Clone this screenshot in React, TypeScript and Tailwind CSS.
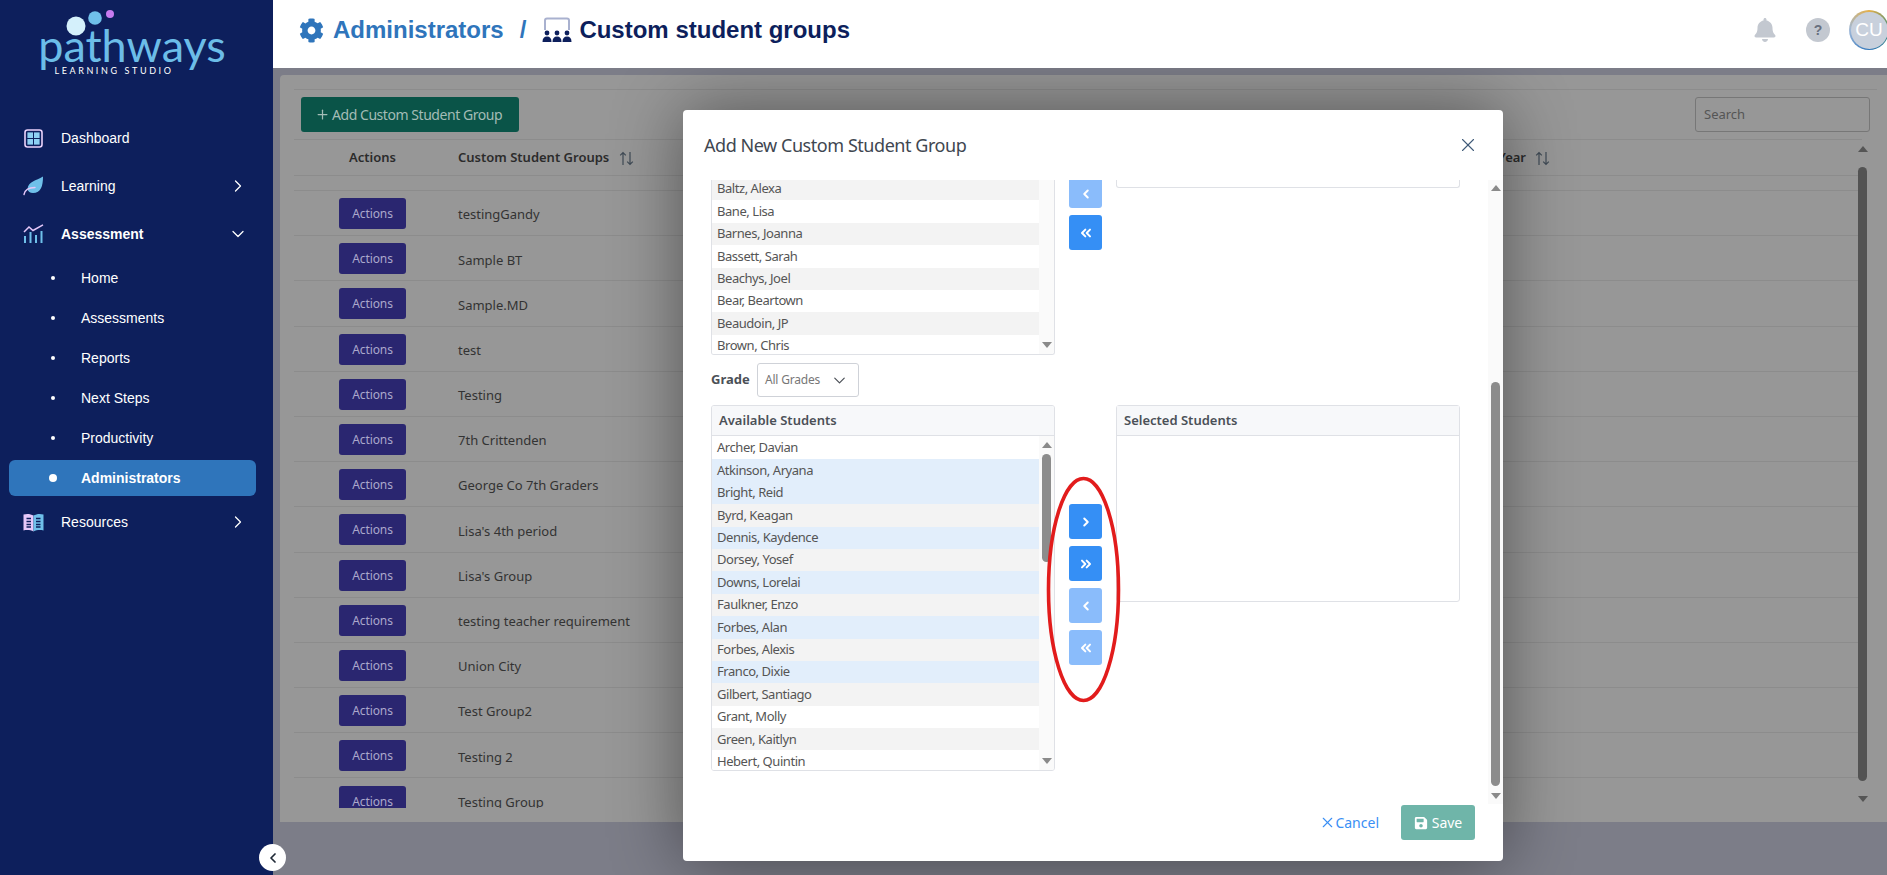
import { ChevronDown, ChevronLeft, ChevronRight, ChevronsLeft, ChevronsRight, Plus, X } from "lucide-react";
import { FaBell, FaCog, FaSave } from "react-icons/fa";

const groups = [
  "testingGandy",
  "Sample BT",
  "Sample.MD",
  "test",
  "Testing",
  "7th Crittenden",
  "George Co 7th Graders",
  "Lisa's 4th period",
  "Lisa's Group",
  "testing teacher requirement",
  "Union City",
  "Test Group2",
  "Testing 2",
  "Testing Group",
];

const topStudents = [
  "Baltz, Alexa",
  "Bane, Lisa",
  "Barnes, Joanna",
  "Bassett, Sarah",
  "Beachys, Joel",
  "Bear, Beartown",
  "Beaudoin, JP",
  "Brown, Chris",
];

const students = [
  { name: "Archer, Davian", bg: "bg-white" },
  { name: "Atkinson, Aryana", bg: "bg-[#e2eefb]" },
  { name: "Bright, Reid", bg: "bg-[#e2eefb]" },
  { name: "Byrd, Keagan", bg: "bg-[#f3f3f3]" },
  { name: "Dennis, Kaydence", bg: "bg-[#e2eefb]" },
  { name: "Dorsey, Yosef", bg: "bg-[#f3f3f3]" },
  { name: "Downs, Lorelai", bg: "bg-[#e2eefb]" },
  { name: "Faulkner, Enzo", bg: "bg-[#f3f3f3]" },
  { name: "Forbes, Alan", bg: "bg-[#e2eefb]" },
  { name: "Forbes, Alexis", bg: "bg-[#f3f3f3]" },
  { name: "Franco, Dixie", bg: "bg-[#e2eefb]" },
  { name: "Gilbert, Santiago", bg: "bg-[#f3f3f3]" },
  { name: "Grant, Molly", bg: "bg-white" },
  { name: "Green, Kaitlyn", bg: "bg-[#f3f3f3]" },
  { name: "Hebert, Quintin", bg: "bg-white" },
];

const subItems = ["Home", "Assessments", "Reports", "Next Steps", "Productivity"];

function DashIcon() {
  return (
    <svg width="19" height="19" viewBox="0 0 19 19">
      <rect x="1" y="1" width="17" height="17" rx="2.5" fill="#0d1f5c" stroke="#ecd3fb" strokeWidth="1.6" />
      <rect x="3.4" y="3.4" width="5.6" height="5.6" fill="#8ed0f2" />
      <rect x="10" y="3.4" width="5.6" height="5.6" fill="#8ed0f2" />
      <rect x="3.4" y="10" width="5.6" height="5.6" fill="#8ed0f2" />
      <rect x="10" y="10" width="5.6" height="5.6" fill="#8ed0f2" />
    </svg>
  );
}

function LeafIcon() {
  return (
    <svg width="21" height="20" viewBox="0 0 21 20">
      <path d="M20 0.5C20 10 18 17 10 17C7 17 5 15.5 4.5 13C5.5 5 13 5 20 0.5Z" fill="#6fc0ea" />
      <path d="M1 18.5C2 13 6 11.5 12 11.5" fill="none" stroke="#e6c8fa" strokeWidth="1.4" strokeLinecap="round" />
    </svg>
  );
}

function ChartIcon() {
  return (
    <svg width="21" height="20" viewBox="0 0 21 20">
      <path d="M1 8L6 3L10 6.5L20 0.8" fill="none" stroke="#e6c8fa" strokeWidth="1.5" />
      <path d="M2 12V19M7.5 8V19M13 11V19M18.5 7V19" stroke="#6fc0ea" strokeWidth="2" />
    </svg>
  );
}

function BookIcon() {
  return (
    <svg width="21" height="19" viewBox="0 0 21 19">
      <path d="M0.5 1.5C4 0.5 7.5 0.8 10.5 2.5V18.5C7.5 17 4 16.7 0.5 17.5Z" fill="#e6c8fa" />
      <path d="M20.5 1.5C17 0.5 13.5 0.8 10.5 2.5V18.5C13.5 17 17 16.7 20.5 17.5Z" fill="#6fc0ea" />
      <path d="M3.5 5.5H8M3.5 8.5H8M3.5 11.5H8M3.5 14H8M13 5.5H17.5M13 8.5H17.5M13 11.5H17.5M13 14H17.5" stroke="#0d1f5c" strokeWidth="1.4" />
    </svg>
  );
}

function GroupsIcon() {
  return (
    <svg width="30" height="27" viewBox="0 0 30 27" className="text-[#0d1f5c]">
      <path d="M3 13V3.5C3 2.4 3.9 1.5 5 1.5H25C26.1 1.5 27 2.4 27 3.5V13" fill="none" stroke="#a9b1cf" strokeWidth="2" />
      <circle cx="5" cy="16" r="2.4" fill="currentColor" />
      <circle cx="15" cy="16" r="2.4" fill="currentColor" />
      <circle cx="25" cy="16" r="2.4" fill="currentColor" />
      <path d="M0.5 25C0.5 21.5 2 19.6 5 19.6C8 19.6 9.5 21.5 9.5 25ZM10.5 25C10.5 21.5 12 19.6 15 19.6C18 19.6 19.5 21.5 19.5 25ZM20.5 25C20.5 21.5 22 19.6 25 19.6C28 19.6 29.5 21.5 29.5 25Z" fill="currentColor" />
    </svg>
  );
}

function SortIcon() {
  return (
    <svg width="15" height="15" viewBox="0 0 15 15" className="text-[#3f4a55]">
      <path d="M4 14V1.5M1.2 4.3L4 1.5L6.8 4.3M11 1V13.5M8.2 10.7L11 13.5L13.8 10.7" fill="none" stroke="currentColor" strokeWidth="1.2" />
    </svg>
  );
}

function Tri({ up, color }: { up?: boolean; color: string }) {
  return (
    <svg width="10" height="6" viewBox="0 0 10 6" fill={color}>
      <path d={up ? "M5 0L10 6H0Z" : "M0 0H10L5 6Z"} />
    </svg>
  );
}

function ListScroll({ thumb }: { thumb: boolean }) {
  return (
    <div className="absolute right-0 top-0 bottom-0 w-[15px] bg-[#fafafa] flex flex-col items-center justify-between py-[6px]">
      {thumb ? <Tri up color="#8a8a8a" /> : <span />}
      {thumb && <div className="absolute left-[3px] top-[18px] w-[9px] h-[108px] rounded-[5px] bg-[#8c8c8c]" />}
      <Tri color="#8a8a8a" />
    </div>
  );
}

function MoveBtn({ light, className, children }: { light?: boolean; className?: string; children: React.ReactNode }) {
  return (
    <div className={`w-[33px] flex items-center justify-center rounded-[3px] text-white ${light ? "bg-[#8abcfb]" : "bg-[#358ff5]"} ${className ?? "h-[35px]"}`}>
      {children}
    </div>
  );
}

function Sidebar() {
  return (
    <aside className="relative z-20 w-[273px] h-full shrink-0 bg-[#0d1f5c] text-white text-[14px] font-['Liberation_Sans',sans-serif]">
      {/* Logo */}
      <div className="h-[114px] flex flex-col items-center">
        <svg width="273" height="36" viewBox="0 0 273 36" className="block">
          <circle cx="76" cy="26" r="9.5" fill="#d4f0fb" />
          <circle cx="95" cy="18" r="6.8" fill="#6fc0ea" />
          <circle cx="110" cy="14" r="4" fill="#c77bf0" />
        </svg>
        <div className="font-['Lato',sans-serif] text-[45px] h-[36px] leading-[36px] text-[#6cbde8] -mt-[9px] pr-[9px]">pathways</div>
        <div className="font-['Lato',sans-serif] text-[9px] leading-[10px] tracking-[2.6px] mt-[3px] pr-[45px]">LEARNING STUDIO</div>
      </div>

      <div className="h-[48px] flex items-center pl-[24px]">
        <span className="w-[37px]"><DashIcon /></span>
        <span>Dashboard</span>
      </div>
      <div className="h-[48px] flex items-center pl-[23px]">
        <span className="w-[38px]"><LeafIcon /></span>
        <span className="flex-1">Learning</span>
        <ChevronRight size={20} strokeWidth={1.5} className="mr-[25px]" />
      </div>
      <div className="h-[48px] flex items-center pl-[23px]">
        <span className="w-[38px]"><ChartIcon /></span>
        <span className="flex-1 font-bold">Assessment</span>
        <ChevronDown size={20} strokeWidth={1.5} className="mr-[25px]" />
      </div>
      {subItems.map((item) => (
        <div key={item} className="h-[40px] flex items-center">
          <span className="w-[4px] h-[4px] rounded-full bg-white ml-[51px] mr-[26px]" />
          <span>{item}</span>
        </div>
      ))}
      <div className="h-[36px] ml-[9px] mr-[17px] my-[2px] rounded-[6px] bg-[#2f75bb] flex items-center font-bold">
        <span className="w-[8px] h-[8px] rounded-full bg-white ml-[40px] mr-[24px]" />
        <span>Administrators</span>
      </div>
      <div className="h-[48px] flex items-center pl-[23px]">
        <span className="w-[38px]"><BookIcon /></span>
        <span className="flex-1">Resources</span>
        <ChevronRight size={20} strokeWidth={1.5} className="mr-[25px]" />
      </div>
    </aside>
  );
}

function Header() {
  return (
    <header className="relative z-20 h-[68px] shrink-0 bg-white flex items-center pl-[26px] pb-[8px] font-['Liberation_Sans',sans-serif] font-bold text-[24px]">
      <FaCog size={25} className="text-[#2f75bb] mr-[9px]" />
      <span className="text-[#2f75bb]">Administrators</span>
      <span className="text-[#2f75bb] ml-[16px] mr-[16px]">/</span>
      <GroupsIcon />
      <span className="text-[#0d1f5c] ml-[7px]">Custom student groups</span>
      <div className="ml-auto flex items-center">
        <FaBell size={24} className="text-[#c3c8d0]" />
        <div className="w-[24px] h-[24px] rounded-full bg-[#c3c8d0] text-[#68707f] text-[14px] flex items-center justify-center ml-[29px]">?</div>
        <div className="w-[40px] h-[40px] rounded-full bg-[conic-gradient(#e5b04a,#3c8a78,#2f75bb,#9fb8d8,#e5b04a)] p-[1.5px] ml-[19px] -mr-[2px] shrink-0">
          <div className="w-full h-full rounded-full bg-[#c8d0dc] text-white font-normal text-[19px] flex items-center justify-center">CU</div>
        </div>
      </div>
    </header>
  );
}

function Table() {
  return (
    <div className="h-[747px] ml-[7px] bg-[#979797] rounded-tl-[4px] pt-[14px] relative font-['Noto_Sans',sans-serif]">
      <div className="ml-[14px] mr-[10px] border-t border-[#8c8c8c] pt-[7px] pb-[7px] flex justify-between pl-[7px] pr-[7px]">
        <div className="w-[218px] h-[35px] rounded-[3px] bg-[#0a5448] text-[#a3bcb6] text-[14px] tracking-[-0.45px] flex items-center pl-[14px]">
          <Plus size={15} className="mr-[2px]" />
          <span>Add Custom Student Group</span>
        </div>
        <div className="w-[175px] h-[35px] rounded-[3px] border border-[#777] text-[#555] text-[13px] flex items-center pl-[8px]">Search</div>
      </div>
      <div className="ml-[14px] w-[1568px] h-[669px] overflow-hidden">
        <div className="h-[37px] border-y border-[#8c8c8c] pt-[1px] flex items-center text-[13px] font-semibold text-[#2b2b2b]">
          <span className="w-[164px] pl-[55px]">Actions</span>
          <span className="mr-[10px]">Custom Student Groups</span>
          <SortIcon />
          <span className="ml-auto">Year</span>
          <span className="ml-[9px] mr-[312px]"><SortIcon /></span>
        </div>
        <div className="h-[15px] border-b border-[#8c8c8c]" />
        {groups.map((g) => (
          <div key={g} className="h-[45.2px] border-b border-[#8c8c8c] flex items-center text-[13px] text-[#333]">
            <span className="w-[164px] pl-[45px] pt-[1px]">
              <span className="w-[67px] h-[31px] rounded-[3px] bg-[#2a2670] text-[#aaa8cc] text-[12px] tracking-[-0.1px] pt-[1px] flex items-center justify-center">Actions</span>
            </span>
            <span className="pt-[4px]">{g}</span>
          </div>
        ))}
      </div>
      {/* table scrollbar */}
      <div className="absolute left-[1578px] top-[70px] h-[658px] w-[9px] flex flex-col items-center justify-between py-[1px]">
        <Tri up color="#555" />
        <div className="w-[9px] h-[614px] rounded-[5px] bg-[#535353]" />
        <Tri color="#555" />
      </div>
    </div>
  );
}

function Modal() {
  return (
    <div className="absolute z-10 left-[683px] top-[110px] w-[820px] h-[751px] bg-white rounded-[4px] shadow-[0_0_70px_rgba(0,0,0,0.45)] font-['Noto_Sans',sans-serif] flex flex-col">
      <div className="h-[70px] shrink-0 flex items-center justify-between pl-[21px] pr-[24px]">
        <h2 className="text-[18px] tracking-[-0.45px] text-[#3f4751]">Add New Custom Student Group</h2>
        <X size={22} strokeWidth={1.2} className="text-[#3f5a78]" />
      </div>

      <div className="h-[625px] shrink-0 relative overflow-hidden pl-[28px] text-[13px] text-[#555]">
        {/* scrolled-off first picker */}
        <div className="flex gap-[14px] h-[175px]">
          <div className="w-[344px] h-full border-x border-b border-[#dfe1e6] rounded-b-[3px] relative overflow-hidden tracking-[-0.45px]">
            <div className="-mt-[2px]">
              {topStudents.map((s, i) => (
                <div key={s} className={`h-[22.4px] w-[327px] pl-[5px] flex items-center ${i % 2 === 0 ? "bg-[#f3f3f3]" : "bg-white"}`}>{s}</div>
              ))}
            </div>
            <ListScroll thumb={false} />
          </div>
          <div className="w-[33px] flex flex-col gap-[7px]">
            <MoveBtn light className="h-[28px] rounded-t-none">
              <ChevronLeft size={14} strokeWidth={3.4} />
            </MoveBtn>
            <MoveBtn>
              <ChevronsLeft size={16} strokeWidth={3} />
            </MoveBtn>
          </div>
          <div className="w-[344px] h-[8px] border-x border-b border-[#dfe1e6] rounded-b-[3px]" />
        </div>

        {/* grade filter */}
        <div className="flex items-center mt-[8px] h-[34px]">
          <span className="font-bold w-[46px] text-[#4b5057]">Grade</span>
          <div className="w-[102px] h-[34px] border border-[#cfd2d8] rounded-[3px] flex items-center justify-between pl-[7px] pr-[9px] text-[12px] tracking-[-0.2px] text-[#777]">
            <span>All Grades</span>
            <ChevronDown size={19} strokeWidth={1.5} className="text-[#4b5057]" />
          </div>
        </div>

        {/* second picker */}
        <div className="flex gap-[14px] mt-[8px] h-[366px]">
          <div className="w-[344px] h-full border border-[#dfe1e6] rounded-[3px] flex flex-col overflow-hidden">
            <div className="h-[30px] shrink-0 bg-[#f7f8fa] border-b border-[#dfe1e6] flex items-center pl-[7px] font-semibold text-[#4b5057]">Available Students</div>
            <div className="relative flex-1 overflow-hidden pt-[1px] tracking-[-0.45px]">
              {students.map((s) => (
                <div key={s.name} className={`h-[22.4px] w-[327px] pl-[5px] flex items-center ${s.bg}`}>{s.name}</div>
              ))}
              <ListScroll thumb />
            </div>
          </div>
          <div className="w-[33px] flex flex-col gap-[7px] pt-[99px]">
            <MoveBtn><ChevronRight size={14} strokeWidth={3.4} /></MoveBtn>
            <MoveBtn><ChevronsRight size={16} strokeWidth={3} /></MoveBtn>
            <MoveBtn light><ChevronLeft size={14} strokeWidth={3.4} /></MoveBtn>
            <MoveBtn light><ChevronsLeft size={16} strokeWidth={3} /></MoveBtn>
          </div>
          <div className="w-[344px] h-[197px] border border-[#dfe1e6] rounded-[3px]">
            <div className="h-[30px] bg-[#f7f8fa] border-b border-[#dfe1e6] flex items-center pl-[7px] font-semibold text-[#4b5057]">Selected Students</div>
          </div>
        </div>

        {/* modal scrollbar */}
        <div className="absolute right-0 top-0 bottom-[1px] w-[15px] bg-[#fafafa] flex flex-col items-center justify-between py-[5px]">
          <Tri up color="#8a8a8a" />
          <div className="absolute left-[3px] top-[202px] w-[9px] h-[404px] rounded-[5px] bg-[#8c8c8c]" />
          <Tri color="#8a8a8a" />
        </div>
      </div>

      <div className="flex-1 flex items-start justify-end pr-[28px] text-[14px]">
        <span className="flex items-center h-[35px] text-[#3a8ff5] mr-[22px]">
          <X size={17} strokeWidth={1.6} className="-mr-[1px]" />
          Cancel
        </span>
        <span className="flex items-center justify-center w-[74px] h-[35px] rounded-[3px] bg-[#6fb5a9] text-white">
          <FaSave size={14} className="mr-[4px]" />
          Save
        </span>
      </div>
    </div>
  );
}

export default function App() {
  return (
    <div className="relative w-full h-screen overflow-hidden flex">
      <Sidebar />
      <main className="flex-1 min-w-0 flex flex-col bg-[#7c7d88]">
        <Header />
        <div className="flex-1 pt-[7px] overflow-hidden">
          <Table />
        </div>
      </main>

      <Modal />

      {/* red annotation ring */}
      <svg width="80" height="232" viewBox="0 0 80 232" className="absolute z-10 left-[1044px] top-[474px]">
        <ellipse cx="39.5" cy="115.5" rx="35" ry="111" fill="none" stroke="#e21c1c" strokeWidth="3.6" />
      </svg>

      {/* collapse button */}
      <div className="absolute z-30 left-[259px] top-[844px] w-[27px] h-[27px] rounded-full bg-white flex items-center justify-center text-[#1f2937]">
        <ChevronLeft size={16} strokeWidth={2.6} />
      </div>
    </div>
  );
}
